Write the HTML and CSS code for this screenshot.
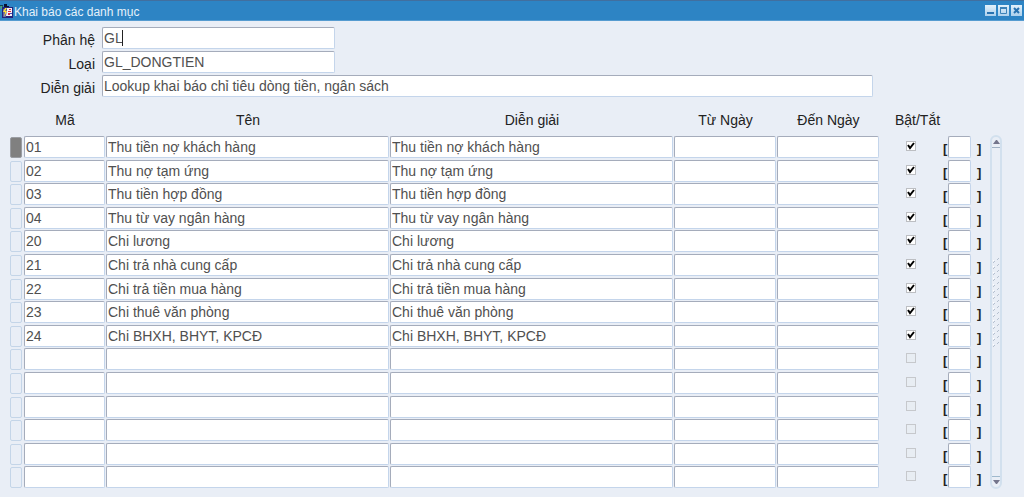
FILE: index.html
```html
<!DOCTYPE html>
<html lang="vi">
<head>
<meta charset="utf-8">
<title>Khai báo các danh mục</title>
<link rel="stylesheet" href="styles.css">
</head>
<body>
<header class="titlebar">
  <svg class="app-icon" viewBox="0 0 14 18" width="14" height="18" aria-hidden="true">
    <path d="M0 3h3v2H0z" fill="#123f55"/>
    <path d="M0 4h2l2 3H1z" fill="#4fa77a"/>
    <path d="M4 2h3v2h2v2H4z" fill="#0b1030"/>
    <path d="M2 5h11v11H2z" fill="#24247c"/>
    <path d="M7 6h5v8H6z" fill="#f4f0f4"/>
    <path d="M3 7h3v8H3z" fill="#6464a4"/>
    <path d="M5 6L3 10h2l-1 5 3-6H5l2-3z" fill="#ffe32e"/>
    <path d="M9 7h2v1H9zM8 9h3v1H8zM8 11h2v2H8z" fill="#d82840"/>
    <path d="M10 11h2v1h-2z" fill="#4848b0"/>
  </svg>
  <h1 class="title">Khai báo các danh mục</h1>
  <div class="window-buttons">
    <button class="window-button" type="button" aria-label="Thu nhỏ"><svg viewBox="0 0 11 11" width="11" height="11"><path d="M2 8h7" stroke="#2872b0" stroke-width="2"/></svg></button>
    <button class="window-button" type="button" aria-label="Phóng to"><svg viewBox="0 0 11 11" width="11" height="11"><path d="M2.500 3v5.500h6V3M2 3h7" fill="none" stroke="#3c82b8"/><path d="M2 3h7" stroke="#3c82b8" stroke-width="2"/></svg></button>
    <button class="window-button" type="button" aria-label="Đóng"><svg viewBox="0 0 11 11" width="11" height="11"><path d="M3 3l5 5M8 3L3 8" stroke="#2872b0" stroke-width="2"/></svg></button>
  </div>
</header>
<main class="content">
  <form class="lookup">
    <label class="lookup-label" for="module">Phân hệ</label>
    <span class="short caret-host"><input class="field" id="module" value="GL"><span class="caret"></span></span>
    <label class="lookup-label" for="type">Loại</label>
    <span class="short"><input class="field" id="type" value="GL_DONGTIEN"></span>
    <label class="lookup-label" for="desc">Diễn giải</label>
    <span class="long"><input class="field" id="desc" value="Lookup khai báo chỉ tiêu dòng tiền, ngân sách"></span>
  </form>
  <div class="list">
    <table class="grid">
      <colgroup><col class="c-marker"><col class="c-code"><col><col><col class="c-date"><col class="c-date"><col class="c-check"><col class="c-flex"></colgroup>
      <thead><tr><td></td><th>Mã</th><th>Tên</th><th>Diễn giải</th><th>Từ Ngày</th><th>Đến Ngày</th><th class="toggle-head">Bật/Tắt</th><td></td></tr></thead>
      <tbody id="rows"></tbody>
    </table>
    <div class="scrollbar">
      <button class="scroll-button" type="button" aria-label="Cuộn lên"><svg viewBox="0 0 7 4" width="7" height="4"><path d="M0 4l3-4h1l3 4z" fill="#74758c"/></svg></button>
      <div class="scroll-track"><svg class="grip" width="8" height="90" aria-hidden="true"><defs><pattern id="grip" width="8" height="6" patternUnits="userSpaceOnUse"><path d="M1 5l2-2M5 2l2-2" stroke="#b5c0cf"/><path d="M1 3l1-1M5 0l1-1" stroke="#fff"/></pattern></defs><rect width="8" height="90" fill="url(#grip)"/></svg></div>
      <button class="scroll-button down" type="button" aria-label="Cuộn xuống"><svg viewBox="0 0 7 4" width="7" height="4"><path d="M0 0h7L4 4H3z" fill="#74758c"/></svg></button>
    </div>
  </div>
</main>
<script src="rows.js"></script>
</body>
</html>
```

FILE: styles.css
```css
* { box-sizing: border-box; }

body {
  display: flex;
  flex-direction: column;
  min-height: 100vh;
  margin: 0;
  background: #e9eef6;
  color: #222;
  font: 14px/20px "Liberation Sans", Arial, sans-serif;
}

button, input { margin: 0; font: inherit; }

.titlebar {
  display: flex;
  align-items: center;
  height: 21px;
  padding-right: 2px;
  background: #2d84c4;
  border-top: 1px solid #416f9f;
  border-bottom: 1px solid #559bd0;
}

.app-icon { flex: none; }

.title {
  flex: 1;
  margin: 0;
  padding-top: 2px;
  color: #e4f1fa;
  font-size: 12px;
  font-weight: normal;
}

.window-buttons { display: flex; gap: 2px; }

.window-button {
  display: flex;
  width: 11px;
  height: 11px;
  padding: 0;
  border: 0;
  background: linear-gradient(#e2f1fb, #acd0ec);
}

.content {
  display: flex;
  flex: 1;
  flex-direction: column;
  padding: 6px 22px 8px 10px;
}

.lookup {
  display: grid;
  grid-template-columns: 85px 1fr;
  column-gap: 7px;
  row-gap: 2px;
  margin-right: 129px;
}

.lookup-label {
  height: 22px;
  padding-top: 4px;
  line-height: 18px;
  text-align: right;
}

.caret-host { position: relative; }

.caret {
  position: absolute;
  top: 3px;
  left: 20px;
  width: 1px;
  height: 16px;
  background: #222;
}

.short { width: 233px; }

.field {
  display: block;
  width: 100%;
  height: 22px;
  padding: 0 1px;
  border: 1px solid;
  border-color: #a5acbb #c4d5eb #c4d5eb #a5acbb;
  border-radius: 2px;
  outline: 0;
  background: #fff;
  color: #505050;
}

.list {
  display: flex;
  flex: 1;
  gap: 6px;
  margin-top: 12px;
}

.grid {
  flex: 1;
  table-layout: fixed;
  border-collapse: collapse;
}

.grid th, .grid td { padding: 0; }
.grid th { height: 26px; padding-bottom: 4px; font-weight: normal; }
.grid .toggle-head { padding-left: 13px; }
.grid tbody td { vertical-align: top; padding: 1px 1px 0 0; }

.c-marker { width: 14px; }
.c-code { width: 82px; }
.c-date { width: 103px; }
.c-check { width: 62px; }
.c-flex { width: 42px; }

.marker {
  display: block;
  width: 12px;
  height: 21px;
  margin-top: 1px;
  padding: 0;
  border: 1px solid #c4d5e8;
  border-radius: 2px;
  background: #e9eef6;
}

.marker.current { background: #808080; border-color: #9a9da3; }

.check-box {
  position: relative;
  display: block;
  width: 10px;
  margin: 5px auto 0;
}

.check {
  display: block;
  width: 10px;
  height: 10px;
  appearance: none;
  border: 1px solid #c6c8cc;
  background: #e8edf3;
}

.check:checked { border-color: #bcbec2; background: #fff; }

.tick {
  position: absolute;
  top: 1px;
  left: 1px;
  pointer-events: none;
}

.flex-field {
  display: grid;
  grid-template-columns: 6px 23px 1fr;
  height: 22px;
  font-size: 13px;
  font-weight: bold;
  line-height: 26px;
}

.flex-field .open { padding-left: 1px; }
.flex-field .close { padding-left: 6px; }

.scrollbar {
  display: flex;
  flex-direction: column;
  width: 12px;
  margin-top: 26px;
  border: 2px solid #d2e0ee;
  border-radius: 6px;
  background: #e9eef6;
}

.scroll-button {
  display: flex;
  flex: none;
  align-items: center;
  justify-content: center;
  height: 11px;
  padding: 0;
  border: 0;
  border-bottom: 1px solid #9fb0c4;
  background: none;
}

.scroll-button.down { border-top: 1px solid #9fb9cd; border-bottom: 0; }

.scroll-track {
  display: flex;
  flex: 1;
  align-items: center;
  justify-content: center;
  padding-bottom: 18px;
}

.grip { flex: none; }
```

FILE: rows.js
```js
const items = [
  ["01", "Thu tiền nợ khách hàng"],
  ["02", "Thu nợ tạm ứng"],
  ["03", "Thu tiền hợp đồng"],
  ["04", "Thu từ vay ngân hàng"],
  ["20", "Chi lương"],
  ["21", "Chi trả nhà cung cấp"],
  ["22", "Chi trả tiền mua hàng"],
  ["23", "Chi thuê văn phòng"],
  ["24", "Chi BHXH, BHYT, KPCĐ"]
];
const visibleRows = 15;
const field = (label, value) =>
  `<td><input class="field" aria-label="${label}" value="${value}"></td>`;

const tick = `<svg class="tick" viewBox="0 0 8 8" width="8" height="8"><path d="M1 3l2 3 4-5" fill="none" stroke="#000" stroke-width="2"/></svg>`;

document.getElementById("rows").innerHTML = Array.from({ length: visibleRows }, (_, i) => {
  const item = items[i];
  const [code, name] = item || ["", ""];
  return `<tr>
    <td><button type="button" class="marker${i === 0 ? " current" : ""}" aria-label="Dòng ${i + 1}"></button></td>
    ${field("Mã", code)}${field("Tên", name)}${field("Diễn giải", name)}${field("Từ Ngày", "")}${field("Đến Ngày", "")}
    <td><span class="check-box"><input type="checkbox" class="check" aria-label="Bật/Tắt"${item ? " checked" : " disabled"}>${item ? tick : ""}</span></td>
    <td><div class="flex-field"><span class="open">[</span><input class="field" aria-label="Thông tin thêm"><span class="close">]</span></div></td>
  </tr>`;
}).join("");
```
